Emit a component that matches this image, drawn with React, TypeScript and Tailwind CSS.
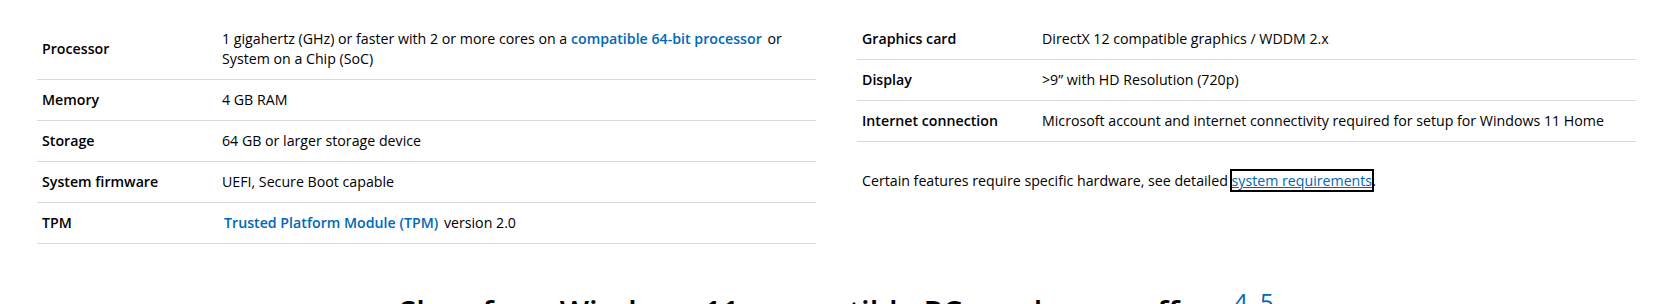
import type { ReactNode } from 'react';

// Spec sheet: two side-by-side requirement tables, a footnote and the shop heading.

const link = 'font-semibold text-[#0067b8] hover:underline';

type Spec = { label: string; value: ReactNode };

const leftSpecs: Spec[] = [
  {
    label: 'Processor',
    value: (
      <>
        1 gigahertz (GHz) or faster with 2 or more cores on a{' '}
        <a href="#" className={`${link} mr-[2px]`}>
          compatible 64-bit processor
        </a>{' '}
        or
        <br />
        System on a Chip (SoC)
      </>
    ),
  },
  { label: 'Memory', value: '4 GB RAM' },
  { label: 'Storage', value: '64 GB or larger storage device' },
  { label: 'System firmware', value: 'UEFI, Secure Boot capable' },
  {
    label: 'TPM',
    value: (
      <>
        <a href="#" className={`${link} ml-[2px] mr-[2px]`}>
          Trusted Platform Module (TPM)
        </a>{' '}
        version 2.0
      </>
    ),
  },
];

const rightSpecs: Spec[] = [
  { label: 'Graphics card', value: 'DirectX 12 compatible graphics / WDDM 2.x' },
  { label: 'Display', value: '>9” with HD Resolution (720p)' },
  {
    label: 'Internet connection',
    value: 'Microsoft account and internet connectivity required for setup for Windows 11 Home',
  },
];

function SpecTable({ specs }: { specs: Spec[] }) {
  return (
    <div>
      {specs.map((s) => (
        <div key={s.label} className="flex items-center border-b border-[#d9d9d9] py-[10px] leading-5">
          <div className="w-[185px] shrink-0 pl-[5px] font-semibold">{s.label}</div>
          <div className="flex-1 pr-4">{s.value}</div>
        </div>
      ))}
    </div>
  );
}

export default function App() {
  return (
    <div className="h-[304px] overflow-hidden bg-white font-['Open_Sans','Noto_Sans',sans-serif] text-[14.2px] text-black">
      <div className="w-[1636px] pl-[37px] pt-[19px]">
        <div className="flex gap-[41px]">
          <div className="w-[779px] shrink-0">
            <SpecTable specs={leftSpecs} />
          </div>
          <div className="w-[779px] shrink-0">
            <SpecTable specs={rightSpecs} />
            <p className="mt-[29px] pl-[5px] leading-5">
              Certain features require specific hardware, see detailed{' '}
              <a href="#" className="text-[#0067b8] underline outline-2 outline-black outline-solid">
                system requirements
              </a>
              .
            </p>
          </div>
        </div>
        <h2 className="mt-[47px] text-center text-[31px] font-semibold leading-10">
          Shop for a Windows 11 compatible PCs and more offers{' '}
          <sup className="text-[24px] font-normal text-[#0067b8]">
            <a href="#">4</a>, <a href="#">5</a>
          </sup>
        </h2>
      </div>
    </div>
  );
}
